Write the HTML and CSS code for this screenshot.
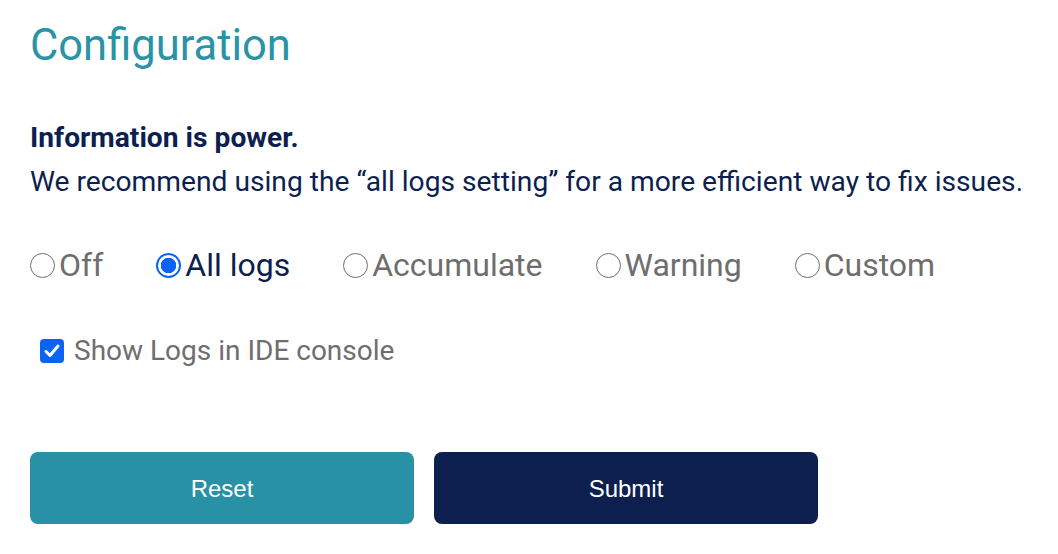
FILE: index.html
```html
<!DOCTYPE HTML>
<html lang="en-US">
<head>
    <title>Configuration</title>
    <meta charset="UTF-8">
    <link rel="stylesheet" href="styles.css">
</head>
<body>
<div class="config">
    <h1 class="config-title">Configuration</h1>
    <div class="config-info">
        <p class="info-lead">Information is power.</p>
        <p class="info-text">We recommend using the “all logs setting” for a more efficient way to fix issues.</p>
    </div>
    <div class="radio-group">
        <label class="radio"><input type="radio" name="level"><span>Off</span></label>
        <label class="radio"><input type="radio" name="level" checked><span>All logs</span></label>
        <label class="radio"><input type="radio" name="level"><span>Accumulate</span></label>
        <label class="radio"><input type="radio" name="level"><span>Warning</span></label>
        <label class="radio"><input type="radio" name="level"><span>Custom</span></label>
    </div>
    <label class="check"><input type="checkbox" checked><span>Show Logs in IDE console</span></label>
    <div class="actions">
        <button class="btn btn-reset">Reset</button>
        <button class="btn btn-submit">Submit</button>
    </div>
</div>
</body>
</html>
```

FILE: styles.css
```css
* {
    box-sizing: border-box;
}

body {
    margin: 0;
    font-family: Roboto, "Liberation Sans", sans-serif;
    background: #fff;
}

p {
    margin: 0;
}

.config {
    padding: 20px 30px;
}

.config-title {
    margin: 0;
    font-size: 43.5px;
    font-weight: 400;
    color: #2a93a6;
    line-height: 52px;
}

.config-info {
    margin-top: 44px;
    color: #0c1f4f;
    font-size: 28.2px;
    line-height: 44px;
}

.info-lead {
    font-weight: 700;
}

.radio-group {
    display: flex;
    gap: 53px;
    margin-top: 41px;
}

.radio {
    display: flex;
    align-items: center;
    gap: 4px;
    font-size: 32px;
    color: #6e6e6e;
    line-height: 40px;
}

.radio input {
    appearance: none;
    margin: 0;
    width: 25px;
    height: 25px;
    border: 1.5px solid #6f6f6f;
    border-radius: 50%;
}

.radio input:checked {
    border: 2.5px solid #0b63f6;
    background: radial-gradient(circle, #0b63f6 0 7.5px, #fff 8px);
}

.radio input:checked + span {
    color: #0c1f4f;
}

.check {
    display: flex;
    align-items: center;
    gap: 10px;
    margin: 48px 0 0 10px;
    font-size: 28px;
    color: #6e6e6e;
    line-height: 36px;
}

.check input {
    appearance: none;
    margin: 0;
    width: 24px;
    height: 24px;
    border-radius: 4px;
    background: #0b63f6 url("data:image/svg+xml,%3Csvg xmlns='http://www.w3.org/2000/svg' viewBox='0 0 24 24'%3E%3Cpath d='M6 12.5l4 4L18 7' fill='none' stroke='%23fff' stroke-width='3' stroke-linecap='round' stroke-linejoin='round'/%3E%3C/svg%3E") center / 24px 24px no-repeat;
}

.actions {
    display: flex;
    gap: 20px;
    margin-top: 83px;
}

.btn {
    width: 384px;
    height: 72px;
    padding-top: 3px;
    border: 0;
    border-radius: 8px;
    color: #fff;
    font-family: "Liberation Sans", Arial, sans-serif;
    font-size: 24px;
}

.btn-reset {
    background: #2891a5;
}

.btn-submit {
    background: #0c1f4f;
}
```
